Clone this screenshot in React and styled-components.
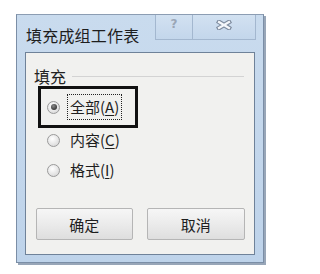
import styled, { createGlobalStyle } from "styled-components";

const GlobalStyle = createGlobalStyle`
  html, body {
    margin: 0;
    padding: 0;
    background: #ffffff;
  }
  body {
    font-family: "Noto Sans CJK SC", "Liberation Sans", sans-serif;
  }
`;

const OPTIONS = [
  { label: "全部", key: "A", checked: true },
  { label: "内容", key: "C", checked: false },
  { label: "格式", key: "I", checked: false },
];

const App = () => {
  return (
    <>
      <GlobalStyle />
      <Page>
        <Window>
          <TitleBar>
            <Title>填充成组工作表</Title>
            <CaptionButtons>
              <HelpButton>?</HelpButton>
              <CloseButton>
                <svg width="16" height="10" viewBox="0 0 16 10">
                  <path
                    d="M3 2 L13 8 M13 2 L3 8"
                    stroke="#7d8b9e"
                    strokeWidth="4.5"
                    strokeLinecap="square"
                  />
                  <path
                    d="M3 2 L13 8 M13 2 L3 8"
                    stroke="#f4f7fb"
                    strokeWidth="2.2"
                    strokeLinecap="square"
                  />
                </svg>
              </CloseButton>
            </CaptionButtons>
          </TitleBar>
          <Content>
            <GroupHeader>
              <GroupLabel>填充</GroupLabel>
              <GroupLine />
            </GroupHeader>
            <OptionList>
              {OPTIONS.map((opt) => (
                <OptionRow key={opt.key} $highlight={opt.checked}>
                  <Radio $checked={opt.checked} />
                  <OptionText $focused={opt.checked}>
                    {opt.label}(<u>{opt.key}</u>)
                  </OptionText>
                </OptionRow>
              ))}
            </OptionList>
            <ButtonRow>
              <DialogButton $width={97}>确定</DialogButton>
              <DialogButton $width={99}>取消</DialogButton>
            </ButtonRow>
          </Content>
        </Window>
      </Page>
    </>
  );
};

export default App;

const Page = styled.div`
  width: 283px;
  height: 274px;
  padding: 14px 0 0 16px;
  box-sizing: border-box;
`;

const Window = styled.div`
  width: 248px;
  height: 249px;
  box-sizing: border-box;
  display: flex;
  flex-direction: column;
  background: linear-gradient(180deg, #c9dbee 0%, #bed3ea 100%);
  border: 1px solid #7b8ea6;
  border-top-color: #8c9db3;
  box-shadow: 2px 2px 0 #98a6b8;
`;

const TitleBar = styled.div`
  height: 37px;
  display: flex;
  justify-content: space-between;
  align-items: flex-start;
  padding-left: 9px;
  padding-right: 7px;
`;

const Title = styled.div`
  font-size: 16px;
  line-height: 16px;
  color: #1e1e1e;
  margin-top: 12px;
  letter-spacing: 0.2px;
`;

const CaptionButtons = styled.div`
  display: flex;
  height: 25px;
`;

const CaptionButton = styled.div`
  height: 25px;
  box-sizing: border-box;
  display: flex;
  align-items: center;
  justify-content: center;
  border: 1px solid #a3b7cf;
  border-top: none;
  background: linear-gradient(180deg, #d2e1f1 0%, #c3d6eb 100%);
`;

const HelpButton = styled(CaptionButton)`
  width: 37px;
  border-right: none;
  color: #9aa6b6;
  font-family: "DejaVu Sans", sans-serif;
  font-size: 12px;
  font-weight: bold;
  padding-bottom: 6px;
`;

const CloseButton = styled(CaptionButton)`
  width: 64px;
  padding-bottom: 5px;
`;

const Content = styled.div`
  flex: 1;
  margin: 0 8px 7px 8px;
  background: #f1f1ef;
  border: 1px solid #6f8299;
  box-sizing: border-box;
  padding: 12px 9px 0 8px;
  display: flex;
  flex-direction: column;
`;

const GroupHeader = styled.div`
  display: flex;
  align-items: center;
  gap: 6px;
  padding-right: 1px;
`;

const GroupLabel = styled.div`
  font-size: 16px;
  line-height: 22px;
  color: #222;
`;

const GroupLine = styled.div`
  flex: 1;
  height: 1px;
  background: #d3d3d3;
`;

const OptionList = styled.div`
  display: flex;
  flex-direction: column;
  margin-top: -1px;
`;

const OptionRow = styled.div`
  display: flex;
  align-items: center;
  gap: 7px;
  box-sizing: border-box;
  height: ${(p) => (p.$highlight ? "42px" : "30px")};
  width: ${(p) => (p.$highlight ? "100px" : "auto")};
  padding-left: ${(p) => (p.$highlight ? "6px" : "9px")};
  border: ${(p) => (p.$highlight ? "3px solid #111" : "none")};
  margin-left: 4px;
  margin-bottom: ${(p) => (p.$highlight ? "-3px" : "0")};
`;

const Radio = styled.div`
  width: 13px;
  height: 13px;
  border-radius: 50%;
  box-sizing: border-box;
  border: 1px solid #9a9a9a;
  background: radial-gradient(circle at 40% 35%, #ffffff 0%, #e6e6e6 55%, #cfcfcf 100%);
  position: relative;
  flex-shrink: 0;

  &::after {
    content: "";
    display: ${(p) => (p.$checked ? "block" : "none")};
    position: absolute;
    left: 2.5px;
    top: 2.5px;
    width: 6px;
    height: 6px;
    border-radius: 50%;
    background: radial-gradient(circle at 40% 35%, #8a8a8a 0%, #3a3a3a 70%, #222 100%);
  }
`;

const OptionText = styled.div`
  font-size: 15px;
  line-height: 22px;
  color: #1e1e1e;
  padding: 1px 2px;
  border: 1px dotted ${(p) => (p.$focused ? "#222" : "transparent")};

  u {
    text-underline-offset: 2px;
  }
`;

const ButtonRow = styled.div`
  display: flex;
  gap: 14px;
  margin-top: auto;
  margin-bottom: 14px;
  padding-left: 2px;
`;

const DialogButton = styled.div`
  width: ${(p) => p.$width}px;
  height: 32px;
  box-sizing: border-box;
  border: 1px solid #b5b5b5;
  border-radius: 2px;
  background: linear-gradient(180deg, #f6f6f6 0%, #ebebeb 50%, #dedede 100%);
  display: flex;
  align-items: center;
  justify-content: center;
  font-size: 15px;
  color: #1e1e1e;
`;
